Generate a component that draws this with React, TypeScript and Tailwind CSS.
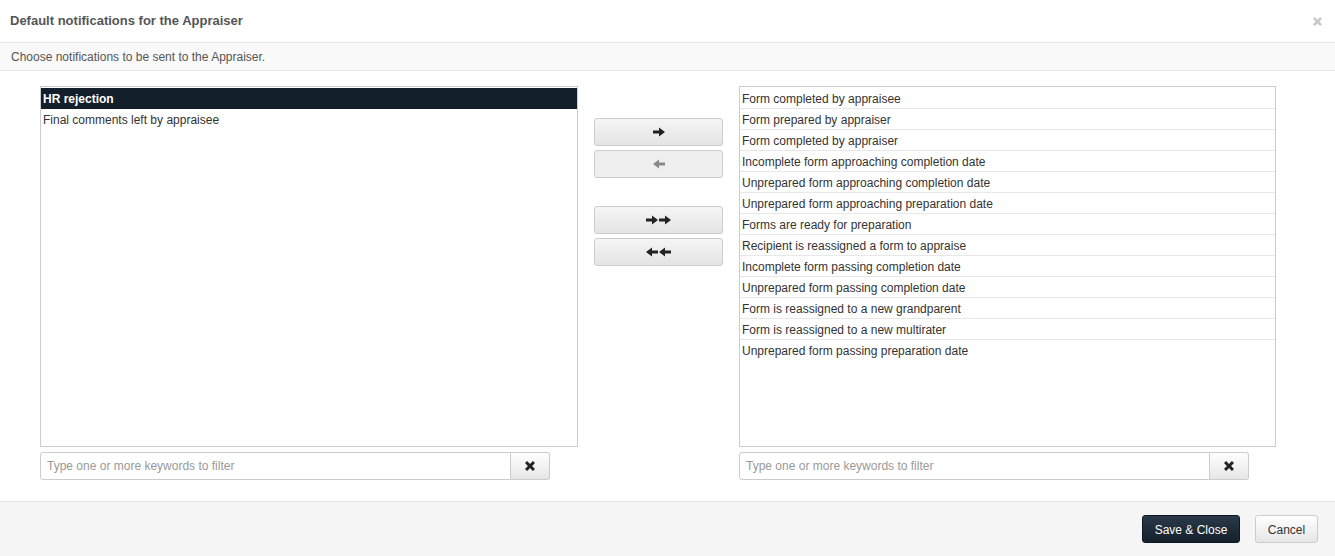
import React from 'react';

const available = ['HR rejection', 'Final comments left by appraisee'];

const selected = [
  'Form completed by appraisee',
  'Form prepared by appraiser',
  'Form completed by appraiser',
  'Incomplete form approaching completion date',
  'Unprepared form approaching completion date',
  'Unprepared form approaching preparation date',
  'Forms are ready for preparation',
  'Recipient is reassigned a form to appraise',
  'Incomplete form passing completion date',
  'Unprepared form passing completion date',
  'Form is reassigned to a new grandparent',
  'Form is reassigned to a new multirater',
  'Unprepared form passing preparation date',
];

function Arrow({ dir, color = '#222' }: { dir: 'right' | 'left'; color?: string }) {
  return (
    <svg width="12" height="10" viewBox="0 0 12 10" style={{ transform: dir === 'left' ? 'scaleX(-1)' : undefined }}>
      <path d="M0 3.5h6V0.5l6 4.5-6 4.5V6.5H0z" fill={color} />
    </svg>
  );
}

// chunky "remove" cross, like the glyph used in the buttons
function XIcon({ size = 11, color = '#222' }: { size?: number; color?: string }) {
  return (
    <svg width={size} height={size} viewBox="0 0 12 12">
      <path
        d="M2.5 0L6 3.5 9.5 0 12 2.5 8.5 6 12 9.5 9.5 12 6 8.5 2.5 12 0 9.5 3.5 6 0 2.5z"
        fill={color}
      />
    </svg>
  );
}

function FilterRow() {
  return (
    <div className="mt-[5px] flex h-[28px] w-[510px]">
      <input
        type="text"
        placeholder="Type one or more keywords to filter"
        className="h-full flex-1 rounded-l-[3px] border border-[#ccc] px-[6px] text-[12px] text-[#333] outline-none placeholder:text-[#999]"
      />
      <button className="flex h-full w-[39px] items-center justify-center rounded-r-[3px] border border-l-0 border-[#ccc] bg-gradient-to-b from-white to-[#e6e6e6]">
        <XIcon size={10} />
      </button>
    </div>
  );
}

function MoveButton({ children, disabled }: { children: React.ReactNode; disabled?: boolean }) {
  return (
    <button
      className={`flex h-[28px] w-[129px] items-center justify-center gap-[1px] rounded-[3px] border border-[#ccc] ${
        disabled ? 'bg-[#efefef]' : 'bg-gradient-to-b from-[#f5f5f5] to-[#e4e4e4]'
      }`}
    >
      {children}
    </button>
  );
}

export default function App() {
  return (
    <div className="flex h-[556px] w-[1335px] flex-col bg-white text-[12px] text-[#333]" style={{ fontFamily: '"Liberation Sans", Arial, sans-serif' }}>
      {/* Header */}
      <div className="flex h-[43px] items-center justify-between border-b border-[#e5e5e5] pl-[10px] pr-[13px]">
        <h1 className="text-[13px] font-bold text-[#555]">Default notifications for the Appraiser</h1>
        <XIcon size={9} color="#c8c8c8" />
      </div>
      <div className="flex h-[28px] items-center border-b border-[#e5e5e5] bg-[#f9f9f9] pl-[11px] text-[12px] text-[#555]">
        Choose notifications to be sent to the Appraiser.
      </div>

      {/* Body */}
      <div className="flex flex-1 pl-[40px] pt-[15px]">
        <div className="flex flex-col">
          <div className="h-[361px] w-[538px] border border-[#ccc] pt-[1px]">
            {available.map((item, i) => (
              <div
                key={item}
                className={`h-[21px] pl-[2px] pt-[1px] leading-[20px] ${i === 0 ? 'bg-[#131f2b] font-bold text-white' : 'text-[#333]'}`}
              >
                {item}
              </div>
            ))}
          </div>
          <FilterRow />
        </div>

        <div className="flex w-[161px] flex-col items-center pt-[32px]">
          <div className="flex flex-col gap-[4px]">
            <MoveButton>
              <Arrow dir="right" />
            </MoveButton>
            <MoveButton disabled>
              <Arrow dir="left" color="#888" />
            </MoveButton>
          </div>
          <div className="mt-[28px] flex flex-col gap-[4px]">
            <MoveButton>
              <Arrow dir="right" />
              <Arrow dir="right" />
            </MoveButton>
            <MoveButton>
              <Arrow dir="left" />
              <Arrow dir="left" />
            </MoveButton>
          </div>
        </div>

        <div className="flex flex-col">
          <div className="h-[361px] w-[537px] border border-[#ccc] pt-[1px]">
            {selected.map((item) => (
              <div key={item} className="h-[21px] border-b border-[#e8e8e8] pl-[2px] pt-[2px] leading-[18px] text-[#333] last:border-b-0">
                {item}
              </div>
            ))}
          </div>
          <FilterRow />
        </div>
      </div>

      {/* Footer */}
      <div className="flex h-[55px] items-center justify-end gap-[15px] border-t border-[#e5e5e5] bg-[#f5f5f5] pr-[17px]">
        <button className="h-[28px] w-[98px] rounded-[3px] border border-[#0f1820] bg-gradient-to-b from-[#2a3a4a] to-[#15202b] pt-[1px] text-[12px] text-white">
          Save &amp; Close
        </button>
        <button className="h-[28px] w-[63px] rounded-[3px] border border-[#ccc] bg-gradient-to-b from-white to-[#e6e6e6] pt-[1px] text-[12px] text-[#333]">
          Cancel
        </button>
      </div>
    </div>
  );
}
